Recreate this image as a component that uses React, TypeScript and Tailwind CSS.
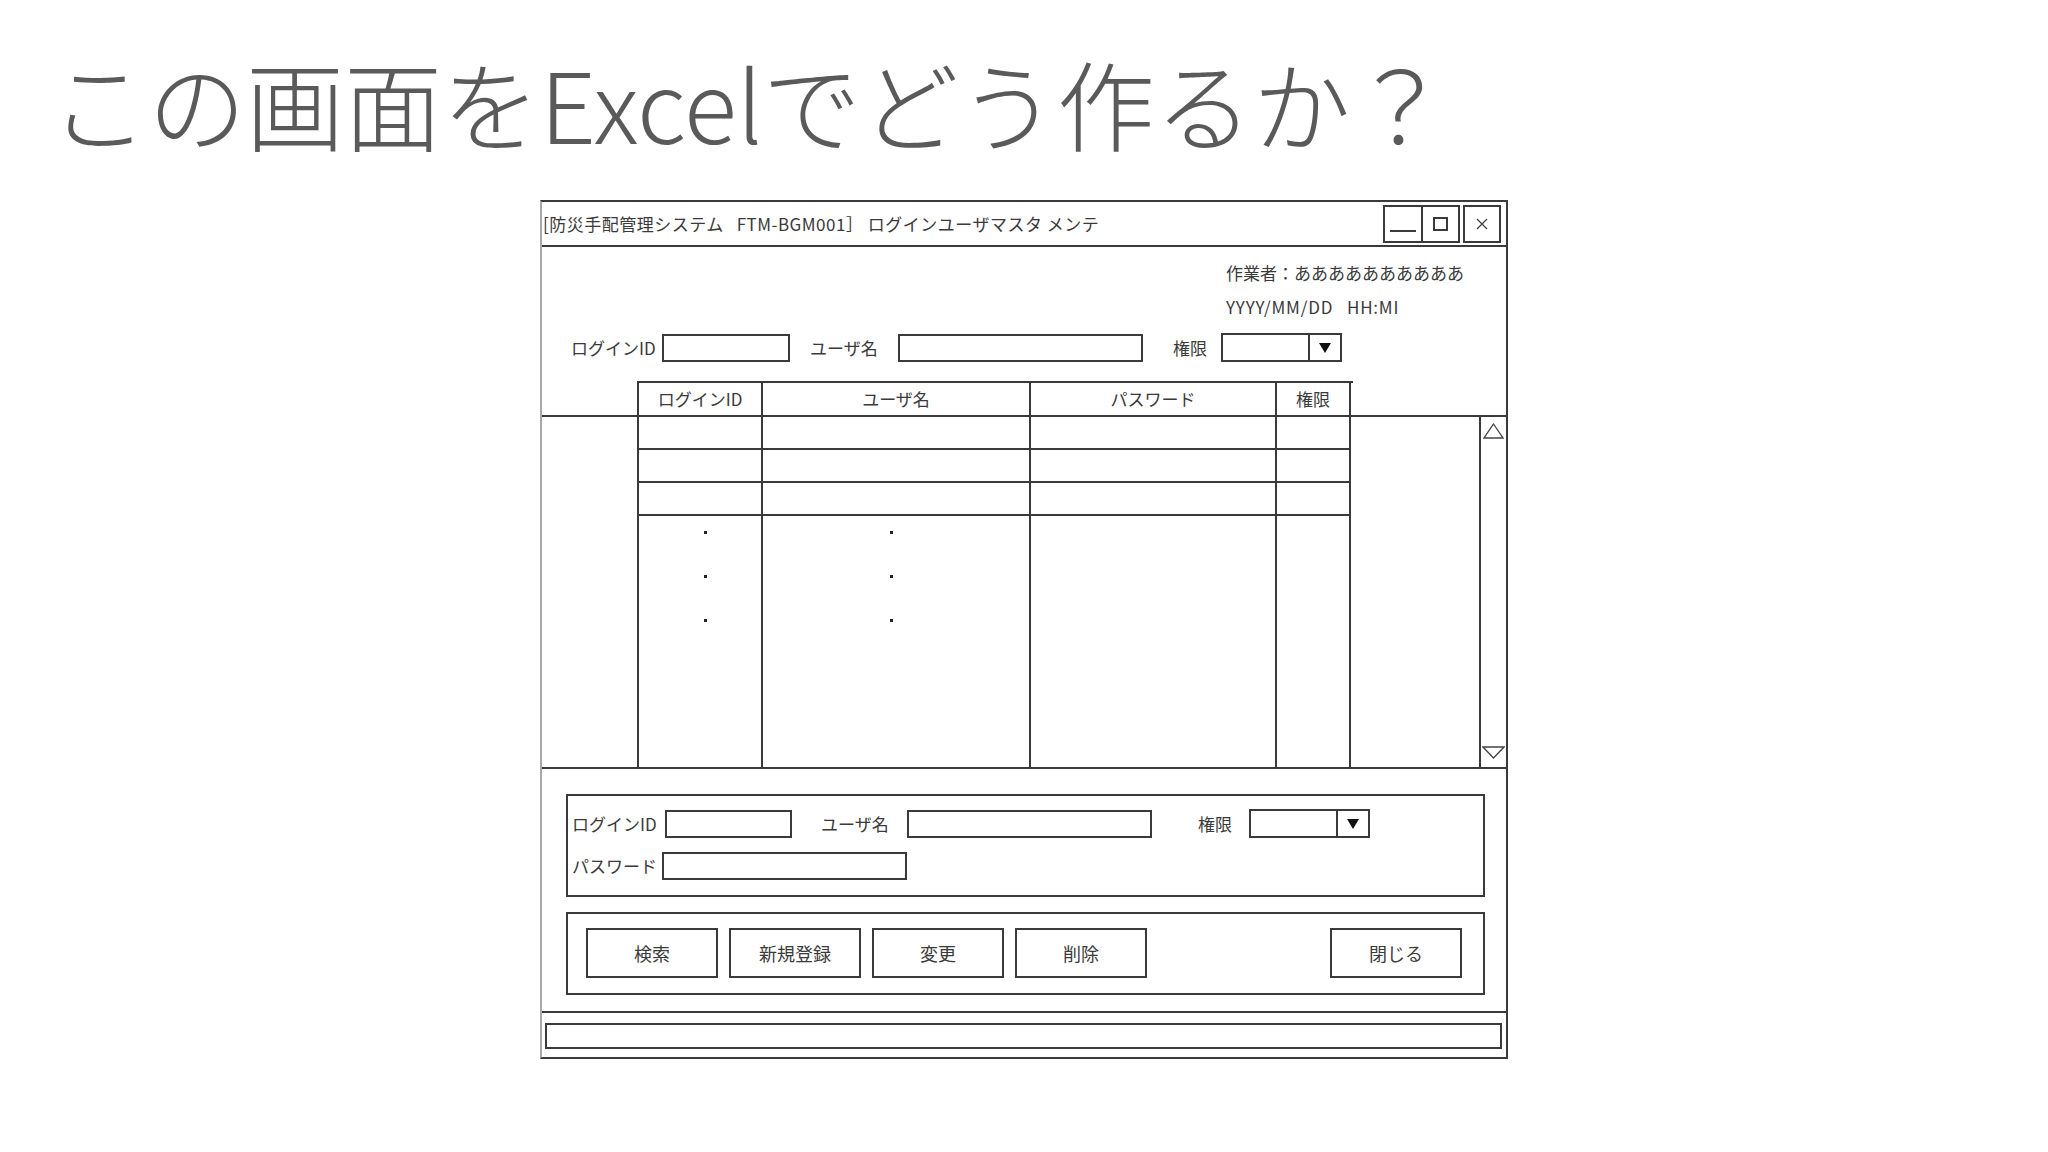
import React from 'react';

const line = 'border-[#3a3a3a]';

function Box({ className }: { className: string }) {
  return <div className={`h-[28px] border-2 ${line} ${className}`} />;
}

function Select() {
  return (
    <div className={`flex h-[29px] w-[121px] border-2 ${line}`}>
      <div className="w-[85px]" />
      <div className={`flex flex-1 items-center justify-center border-l-2 ${line}`}>
        <svg width="12" height="10" viewBox="0 0 12 10">
          <polygon points="0,0 12,0 6,10" fill="#111" />
        </svg>
      </div>
    </div>
  );
}

function Btn({ label, className = '' }: { label: string; className?: string }) {
  return (
    <div className={`flex h-[50px] w-[132px] items-center justify-center border-2 ${line} text-[18px] ${className}`}>
      {label}
    </div>
  );
}

const cols = ['ログインID', 'ユーザ名', 'パスワード', '権限'];

function Dots({ pad }: { pad: string }) {
  return (
    <div className={`flex flex-col gap-[41px] pt-[15px] ${pad}`}>
      <span className="block h-[3px] w-[3px] bg-[#222]" />
      <span className="block h-[3px] w-[3px] bg-[#222]" />
      <span className="block h-[3px] w-[3px] bg-[#222]" />
    </div>
  );
}

export default function App() {
  return (
    <div className="h-[1152px] w-[2048px] bg-white font-['Noto_Sans_CJK_JP',sans-serif] text-[17px] text-[#3a3a3a]">
      <div className="h-[200px] pl-[50px] pt-[52px]">
        <h1 className="whitespace-nowrap text-[98px] font-light leading-none text-[#5a5a5a]">
          この画面をExcelでどう作るか？
        </h1>
      </div>

      <div className={`ml-[540px] flex h-[859px] w-[968px] flex-col border-2 ${line} border-l-[#a8a8a8]`}>
        {/* title bar */}
        <div className={`flex h-[45px] items-center border-b-2 ${line} pr-[5px]`}>
          <div className="flex-1 whitespace-pre pl-[1px] leading-[20px] tracking-[0.5px]">
            [防災手配管理システム   FTM-BGM001］ ログインユーザマスタ メンテ
          </div>
          <div className={`flex h-[38px] w-[40px] items-end justify-center border-2 ${line} pb-[9px]`}>
            <div className="h-[2px] w-[26px] bg-[#3a3a3a]" />
          </div>
          <div className={`flex h-[38px] w-[37px] items-center justify-center border-2 border-l-0 ${line}`}>
            <div className={`h-[14px] w-[15px] border-2 ${line}`} />
          </div>
          <div className={`ml-[3px] flex h-[38px] w-[38px] items-center justify-center border-2 ${line}`}>
            <svg width="12" height="12" viewBox="0 0 12 12">
              <path d="M1 1 L11 11 M11 1 L1 11" stroke="#444" strokeWidth="1.3" />
            </svg>
          </div>
        </div>

        {/* header info + search */}
        <div className="flex h-[134px] flex-col">
          <div className="ml-[684px] mt-[16px] leading-[20px]">作業者：ああああああああああ</div>
          <div className="ml-[684px] mt-[14px] whitespace-pre leading-[20px] tracking-[0.8px]">YYYY/MM/DD   HH:MI</div>
          <div className="mt-[16px] flex items-center pl-[29px]">
            <span className="w-[91px]">ログインID</span>
            <Box className="w-[128px]" />
            <span className="ml-[20px] w-[88px]">ユーザ名</span>
            <Box className="w-[245px]" />
            <span className="ml-[30px] w-[48px]">権限</span>
            <Select />
          </div>
        </div>

        {/* table header */}
        <div className={`h-[36px] border-b-2 ${line} pl-[95px]`}>
          <div className={`grid h-full w-[716px] grid-cols-[124px_268px_246px_74px] border-l-2 border-t-2 ${line}`}>
            {cols.map((c) => (
              <div key={c} className={`flex items-center justify-center border-r-2 ${line}`}>
                {c}
              </div>
            ))}
          </div>
        </div>

        {/* table body */}
        <div className={`flex h-[352px] border-b-2 ${line}`}>
          <div className="w-[95px]" />
          <div className={`grid h-full w-[716px] grid-cols-[124px_268px_246px_74px] grid-rows-[33px_33px_33px_1fr] border-l-2 ${line}`}>
            {[0, 1, 2].map((r) =>
              cols.map((c) => <div key={`${r}-${c}`} className={`border-b-2 border-r-2 ${line}`} />)
            )}
            <div className={`border-r-2 ${line}`}>
              <Dots pad="pl-[65px]" />
            </div>
            <div className={`border-r-2 ${line}`}>
              <Dots pad="pl-[127px]" />
            </div>
            <div className={`border-r-2 ${line}`} />
            <div className={`border-r-2 ${line}`} />
          </div>
          <div className="flex-1" />
          <div className={`flex w-[27px] flex-col items-center justify-between border-l-2 ${line} pb-[8px] pt-[6px]`}>
            <svg width="21" height="16" viewBox="0 0 21 16">
              <polygon points="10.5,1 20,15 1,15" fill="none" stroke="#444" strokeWidth="1.3" />
            </svg>
            <svg width="23" height="13" viewBox="0 0 23 13">
              <polygon points="1,1 22,1 11.5,12" fill="none" stroke="#444" strokeWidth="1.3" />
            </svg>
          </div>
        </div>

        {/* edit form + buttons */}
        <div className={`flex h-[244px] flex-col border-b-2 ${line} pl-[24px]`}>
          <div className={`mt-[25px] flex h-[103px] w-[919px] flex-col border-2 ${line} pl-[4px] pt-[13px]`}>
            <div className="flex items-center">
              <span className="w-[93px]">ログインID</span>
              <Box className="w-[127px]" />
              <span className="ml-[29px] w-[86px]">ユーザ名</span>
              <Box className="w-[245px]" />
              <span className="ml-[46px] w-[51px]">権限</span>
              <Select />
            </div>
            <div className="mt-[14px] flex items-center">
              <span className="w-[90px]">パスワード</span>
              <Box className="w-[245px]" />
            </div>
          </div>
          <div className={`mt-[15px] flex h-[83px] w-[919px] items-start justify-between border-2 ${line} pl-[18px] pr-[21px] pt-[14px]`}>
            <div className="flex gap-[11px]">
              <Btn label="検索" />
              <Btn label="新規登録" />
              <Btn label="変更" />
              <Btn label="削除" />
            </div>
            <Btn label="閉じる" />
          </div>
        </div>

        {/* status bar */}
        <div className="flex-1 pl-[3px] pr-[4px] pt-[10px]">
          <div className={`h-[26px] border-2 ${line}`} />
        </div>
      </div>
    </div>
  );
}
